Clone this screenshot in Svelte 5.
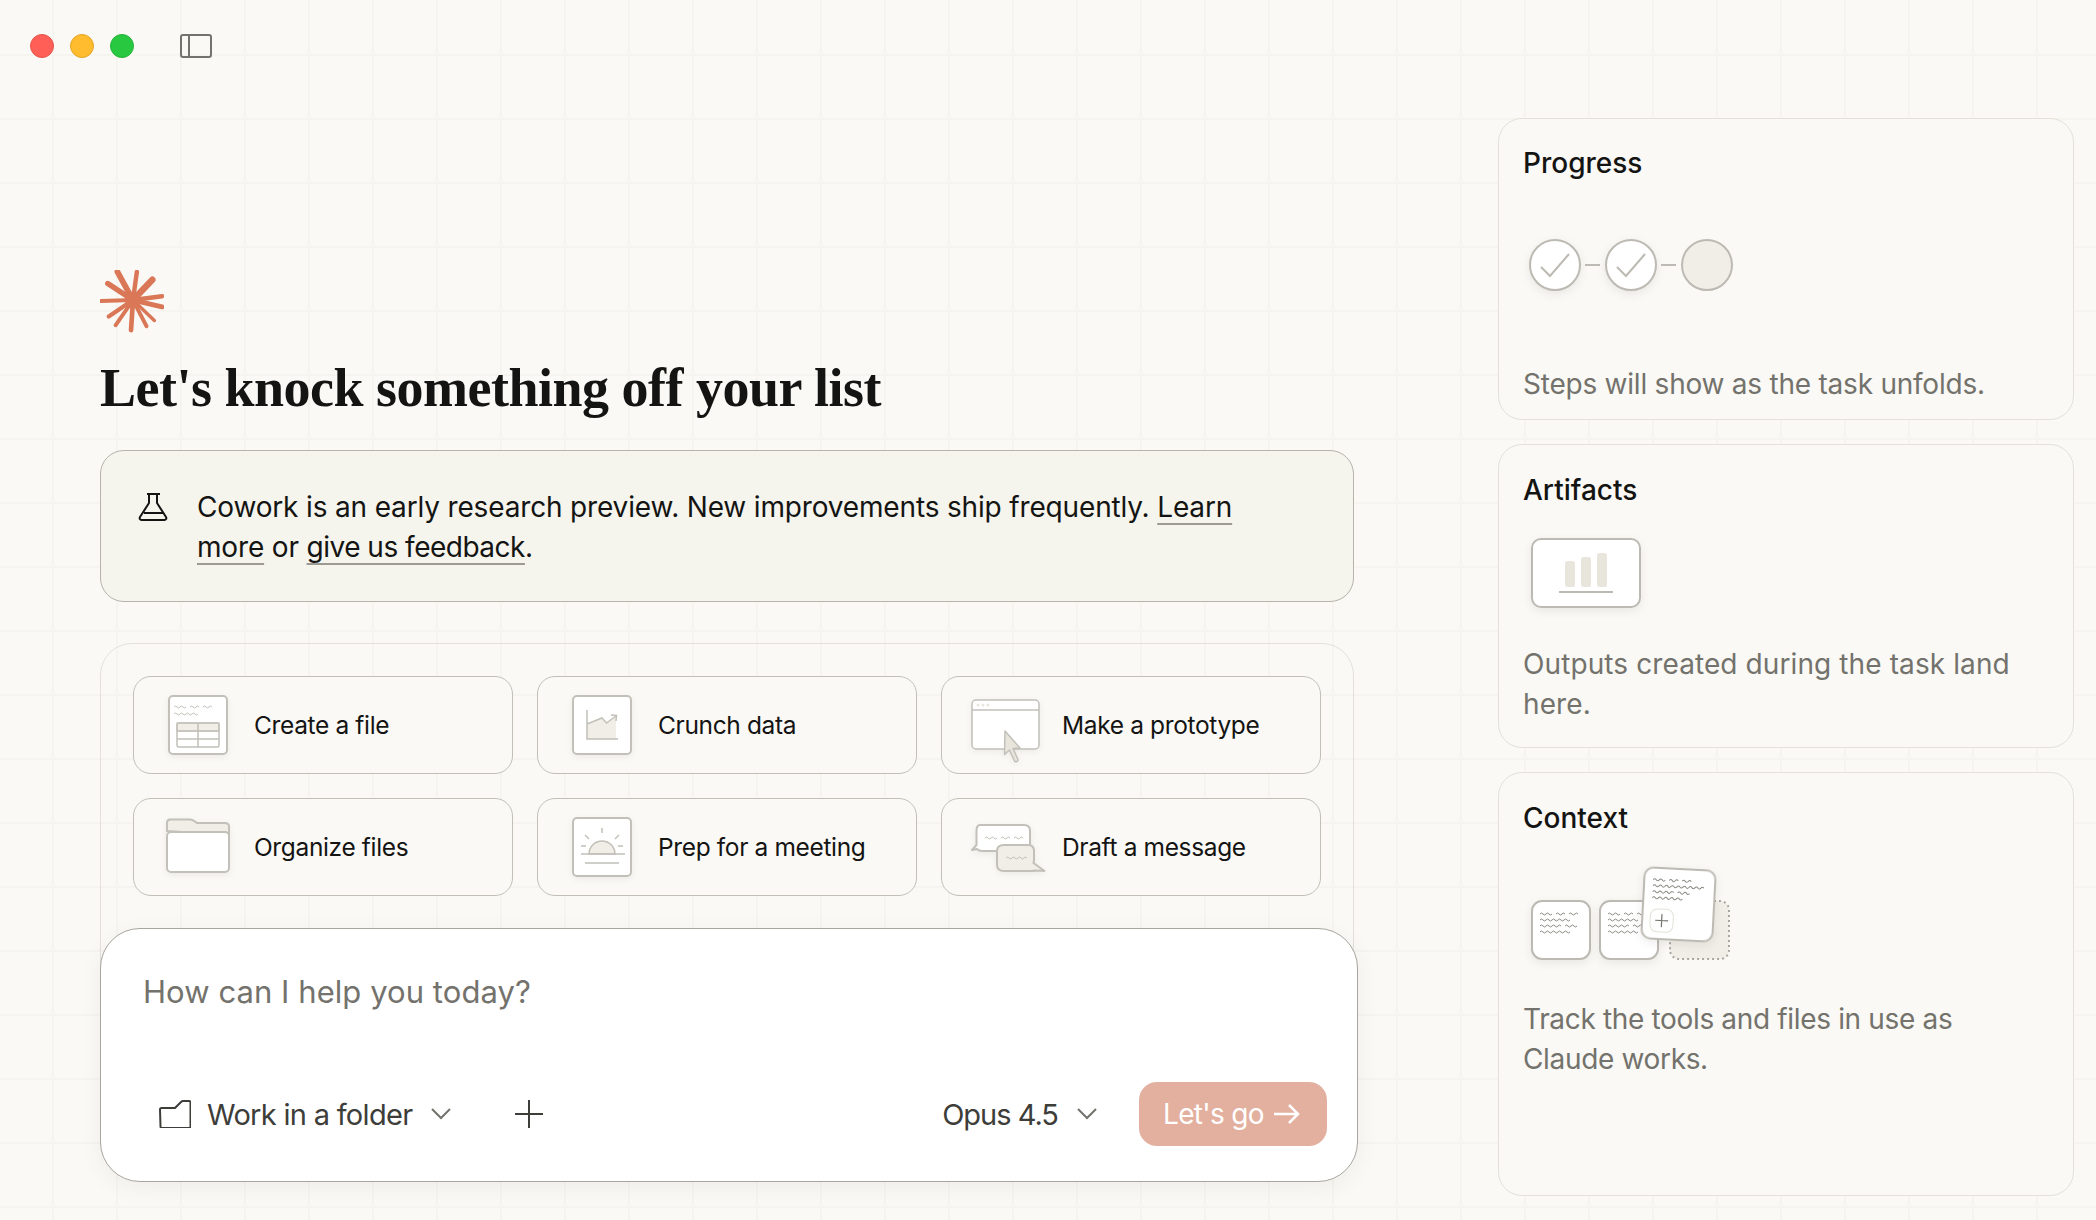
<script>
  // little scalloped "text" lines used in the illustrations
  const wave = (x, y, n, w = 3) => {
    let d = `M${x} ${y}`;
    for (let i = 0; i < n; i++) d += ` q${w / 2} ${i % 2 ? 2 : -2} ${w} 0`;
    return d;
  };
  const words = (x, y, counts, w = 3, gap = 4) => {
    let d = "";
    let cx = x;
    for (const c of counts) {
      d += wave(cx, y, c, w) + " ";
      cx += c * w + gap;
    }
    return d;
  };
  const rays = [
    [37, 21, 6], [57, 21, 4.6], [73, 29, 6.6], [83, 46, 4.6], [83, 57, 5],
    [75, 71, 3.6], [67, 77, 4], [51, 81, 4.8], [35, 76, 4], [28, 67, 4.4],
    [20, 51, 4.2], [27, 33, 5.6]
  ];
</script>

<div class="page">
  <header class="titlebar">
    <span class="light red"></span>
    <span class="light yellow"></span>
    <span class="light green"></span>
    <svg class="sidebar-toggle" width="32" height="24" viewBox="0 0 32 24" fill="none" stroke="#73726c" stroke-width="2">
      <rect x="1" y="1" width="30" height="22" rx="2" />
      <path d="M9 1v22" />
    </svg>
  </header>

  <div class="content">
    <main class="left">
      <svg class="star" width="64" height="64" viewBox="19 19 66 66" fill="none" stroke="#d97757" stroke-linecap="round">
        {#each rays as [x, y, w]}
          <path d={`M53 50 L${x} ${y}`} stroke-width={w} />
        {/each}
        <circle cx="53" cy="50" r="8" fill="#d97757" stroke="none" />
      </svg>
      <h1>Let's knock something off your list</h1>

      <div class="banner">
        <svg width="30" height="30" viewBox="0 0 30 30" fill="none" stroke="#141413" stroke-width="2" stroke-linejoin="round">
          <path d="M9 2h13M11 2v9L2 25c-.8 1.500 0 3 1.500 3h23c1.500 0 2.300-1.500 1.500-3l-9-14V2M6 21h19" />
        </svg>
        <p>Cowork is an early research preview. New improvements ship frequently. <a href="#learn">Learn</a> <a href="#learn">more</a> or <a class="feedback" href="#feedback">give us feedback</a>.</p>
      </div>

      <div class="panel">
        <div class="tiles">
          <button class="tile">
            <svg width="80" height="80" viewBox="0 0 80 80" fill="none" stroke="#c2c0b9">
              <rect x="11" y="11" width="58" height="58" rx="4" fill="#fff" stroke-width="2" />
              <path d={words(16, 22, [4, 3, 3])} stroke-width="1" />
              <path d={wave(16, 29, 8)} stroke-width="1" />
              <rect x="19" y="38" width="42" height="8" fill="#f0eee6" />
              <rect x="19" y="38" width="42" height="24" rx="1.500" stroke-width="1.500" />
              <path d="M19 46h42M19 54h42M40 38v24" stroke-width="1.500" />
            </svg>
            <span>Create a file</span>
          </button>
          <button class="tile">
            <svg width="80" height="80" viewBox="0 0 80 80" fill="none" stroke="#c2c0b9">
              <rect x="11" y="11" width="58" height="58" rx="4" fill="#fff" stroke-width="2" />
              <path d="M25 39l15-6 4.500 5L54 32v22H25z" fill="#f0eee6" stroke="none" />
              <path d="M25 25v29h31M25 39l15-6 4.500 5L54 31M49 30l5.500 .5L54 36" stroke-width="1.500" />
            </svg>
            <span>Crunch data</span>
          </button>
          <button class="tile">
            <svg width="80" height="80" viewBox="0 0 80 80" fill="none" stroke="#c2c0b9">
              <rect x="6" y="15" width="67" height="49" rx="4" fill="#fff" stroke-width="1.500" />
              <path d="M6 25h67" stroke-width="1.500" />
              <circle cx="12" cy="20" r="1.500" fill="#e8e6dc" stroke="none" />
              <circle cx="17" cy="20" r="1.500" fill="#e8e6dc" stroke="none" />
              <circle cx="22" cy="20" r="1.500" fill="#e8e6dc" stroke="none" />
              <path d="M39 46l15 17-7 .500 5 11c.500 2-2.500 3-3.500 1.500l-5-11-5 4.500z" fill="#e8e6dc" stroke-width="1.500" stroke-linejoin="round" />
            </svg>
            <span>Make a prototype</span>
          </button>
          <button class="tile">
            <svg width="80" height="80" viewBox="0 0 80 80" fill="none" stroke="#c2c0b9" stroke-width="2">
              <path d="M9 24v-8c0-2 1-3.500 3-3.500h20c2 0 3 .500 5 2l2 1.500h28c2 0 4 1 4 3.500V28z" fill="#f0eee6" />
              <rect x="9" y="25" width="62" height="40" rx="4" fill="#fff" />
            </svg>
            <span>Organize files</span>
          </button>
          <button class="tile">
            <svg width="80" height="80" viewBox="0 0 80 80" fill="none" stroke="#c2c0b9">
              <rect x="11" y="11" width="58" height="58" rx="4" fill="#fff" stroke-width="2" />
              <path d="M27 47a13 13 0 0 1 26 0z" fill="#f0eee6" stroke-width="1.500" />
              <path d="M19 47h44M23 56h34M40 21v5M23 28l4 4M57 28l-4 4M19 39h5M56 39h5" stroke-width="1.500" />
            </svg>
            <span>Prep for a meeting</span>
          </button>
          <button class="tile">
            <svg width="80" height="80" viewBox="0 0 80 80" fill="none" stroke="#c2c0b9">
              <path d="M14 18h44c4 0 6 2 6 6v14c0 4-2 6-6 6H16c-3 0-4-1-5-2l-5 1 4.500-5V24c0-4 1-6 3.500-6z" fill="#fff" stroke-width="2" stroke-linejoin="round" />
              <path d={words(19, 31, [4, 3, 3])} stroke-width="1" />
              <path d="M38 38h24c4 0 6 2 6 6v8c0 2 0 3-.500 4l11 8-9-.500c-1 .500-2 .500-4 .500H38c-4 0-7-2-7-6V44c0-4 3-6 7-6z" fill="#f0eee6" stroke-width="2" stroke-linejoin="round" />
              <path d={wave(40, 51, 7)} stroke-width="1" />
            </svg>
            <span>Draft a message</span>
          </button>
        </div>
      </div>

      <div class="composer">
        <div class="placeholder">How can I help you today?</div>
        <div class="composer-row">
          <div class="group">
            <svg width="32" height="28" viewBox="0 0 32 28" fill="none" stroke="#3d3d3a" stroke-width="2" stroke-linejoin="round">
              <path d="M1 9.500c0-1 .500-1.500 1.500-1.500h13.500l6-6c.500-.500 1-1 2-1h6c1 0 1.500 .500 1.500 1.500v24c0 1-.500 1.500-1.500 1.500h-27c-1 0-1.500-.500-1.500-1.500z" />
            </svg>
            <span class="folder-label">Work in a folder</span>
            <svg class="chev" width="20" height="12" viewBox="0 0 20 12" fill="none" stroke="#73726c" stroke-width="2"><path d="M1 1l9 9 9-9" /></svg>
            <svg class="plus" width="28" height="28" viewBox="0 0 28 28" fill="none" stroke="#3d3d3a" stroke-width="2"><path d="M14 0v28M0 14h28" /></svg>
          </div>
          <div class="group">
            <span class="model">Opus 4.5</span>
            <svg class="chev" width="20" height="12" viewBox="0 0 20 12" fill="none" stroke="#73726c" stroke-width="2"><path d="M1 1l9 9 9-9" /></svg>
            <button class="go">
              Let's go
              <svg width="26" height="22" viewBox="0 0 26 22" fill="none" stroke="#fff" stroke-width="2.500"><path d="M0 11h24M15 2l9 9-9 9" /></svg>
            </button>
          </div>
        </div>
      </div>
    </main>

    <aside class="right">
      <section class="card progress">
        <h2>Progress</h2>
        <svg class="art steps" width="170" height="64" viewBox="0 0 170 64" fill="none" stroke="#bcbab2" stroke-width="2">
          <circle cx="32" cy="32" r="25" fill="#fff" class="lift" />
          <path d="M18 34l9 9 19-22" stroke-width="2" />
          <path d="M62 32h15" />
          <circle cx="108" cy="32" r="25" fill="#fff" class="lift" />
          <path d="M94 34l9 9 19-22" stroke-width="2" />
          <path d="M138 32h15" />
          <circle cx="184" cy="32" r="25" fill="#f0eee6" />
        </svg>
        <p>Steps will show as the task unfolds.</p>
      </section>

      <section class="card artifacts">
        <h2>Artifacts</h2>
        <svg class="art" width="120" height="80" viewBox="0 0 120 80" fill="none">
          <rect x="9" y="10" width="108" height="68" rx="9" fill="#fff" stroke="#bcbab2" stroke-width="2" class="lift" />
          <rect x="42" y="32" width="10" height="26" rx="2.500" fill="#e8e6dc" />
          <rect x="58" y="28" width="10" height="30" rx="2.500" fill="#e8e6dc" />
          <rect x="74" y="24" width="10" height="34" rx="2.500" fill="#e8e6dc" />
          <path d="M36 63h54" stroke="#bcbab2" stroke-width="2" />
        </svg>
        <p>Outputs created during the task land here.</p>
      </section>

      <section class="card context">
        <h2>Context</h2>
        <svg class="art" width="220" height="110" viewBox="0 0 220 110" fill="none" stroke="#bcbab2">
          <rect x="147" y="44" width="59" height="58" rx="9" fill="#f0eee6" stroke="#a8a69e" stroke-width="2" stroke-dasharray="2 3" />
          <rect x="9" y="44" width="58" height="58" rx="10" fill="#fff" stroke-width="2" class="lift" />
          <path d={words(17, 57, [4, 3, 3])} stroke="#8c8a83" />
          <path d={wave(17, 63, 10)} stroke="#8c8a83" />
          <path d={words(17, 69, [7, 4])} stroke="#8c8a83" />
          <path d={wave(17, 75, 10)} stroke="#8c8a83" />
          <rect x="77" y="44" width="58" height="58" rx="10" fill="#fff" stroke-width="2" class="lift" />
          <path d={words(85, 57, [4, 3, 3])} stroke="#8c8a83" />
          <path d={wave(85, 63, 10)} stroke="#8c8a83" />
          <path d={words(85, 69, [7, 4])} stroke="#8c8a83" />
          <path d={wave(85, 75, 10)} stroke="#8c8a83" />
          <g transform="rotate(3 156 48)">
            <rect x="120" y="12" width="71" height="71" rx="9" fill="#fff" stroke-width="2" class="lift" />
            <path d={words(129, 24, [4, 3, 3])} stroke="#8c8a83" />
            <path d={wave(129, 30, 17)} stroke="#8c8a83" />
            <path d={words(129, 36, [7, 4])} stroke="#8c8a83" />
            <path d={wave(129, 42, 10)} stroke="#8c8a83" />
            <rect x="128" y="53" width="23" height="23" rx="7" fill="#fff" stroke="#e3e1d9" />
            <path d="M139.500 58v13M133 64.500h13" stroke="#73726c" stroke-width="1.200" />
          </g>
        </svg>
        <p>Track the tools and files in use as Claude works.</p>
      </section>
    </aside>
  </div>
</div>

<style>
  :global(body) {
    margin: 0;
    background: #faf9f5;
  }
  .page {
    width: 2096px;
    height: 1220px;
    overflow: hidden;
    background-color: #faf9f5;
    background-image:
      linear-gradient(to right, #f5f4ee 2px, transparent 2px),
      linear-gradient(to bottom, #f5f4ee 2px, transparent 2px);
    background-size: 64px 64px;
    background-position: 52px 54px;
    font-family: Inter, "Noto Sans", sans-serif;
    color: #141413;
  }
  .titlebar {
    height: 92px;
    display: flex;
    align-items: center;
    padding-left: 30px;
    box-sizing: border-box;
    gap: 16px;
  }
  .light {
    width: 24px;
    height: 24px;
    border-radius: 50%;
    box-sizing: border-box;
    border: 1px solid;
  }
  .red { background: #ff5f57; border-color: #e5534b; }
  .yellow { background: #febc2e; border-color: #e5a428; }
  .green { background: #28c840; border-color: #24b339; }
  .sidebar-toggle { margin-left: 30px; }

  .content {
    display: flex;
    align-items: flex-start;
  }
  .left {
    width: 1258px;
    margin-left: 100px;
    padding-top: 178px;
  }
  .star { display: block; }
  h1 {
    margin: 24px 0 32px;
    font-family: "Liberation Serif", serif;
    font-size: 54px;
    line-height: 60px;
    font-weight: 700;
    letter-spacing: -0.5px;
  }
  .banner {
    width: 1254px;
    height: 152px;
    box-sizing: border-box;
    display: flex;
    align-items: flex-start;
    gap: 29px;
    padding: 36px 100px 0 37px;
    background: #f5f4ed;
    border: 1.5px solid #b5b3ab;
    border-radius: 24px;
  }
  .banner svg { flex: none; margin-top: 5px; }
  .banner p {
    margin: 0;
    font-size: 28px;
    line-height: 40px;
    letter-spacing: -0.16px;
  }
  .banner a {
    color: inherit;
    text-decoration: underline;
    text-decoration-color: #9c9a92;
    text-decoration-thickness: 2px;
    text-underline-offset: 6px;
  }
  .banner .feedback { letter-spacing: -0.5px; }
  .panel {
    width: 1254px;
    margin-top: 41px;
    box-sizing: border-box;
    padding: 32px 32px 100px;
    border: 1.5px solid #e3e1d9;
    border-radius: 32px;
  }
  .tiles {
    display: grid;
    grid-template-columns: repeat(3, 380px);
    grid-auto-rows: 98px;
    gap: 24px;
  }
  .tile {
    display: flex;
    align-items: center;
    gap: 16px;
    padding: 0 0 0 24px;
    background: #faf9f5;
    border: 1.5px solid #c2c0b6;
    border-radius: 18px;
    font-family: inherit;
    font-size: 24.5px;
    letter-spacing: -0.36px;
    color: #141413;
    text-align: left;
  }
  .tile svg {
    flex: none;
    overflow: visible;
    filter: drop-shadow(0 2px 3px rgba(0, 0, 0, 0.06));
  }
  .composer {
    position: relative;
    height: 254px;
    margin-top: -69px;
    box-sizing: border-box;
    display: flex;
    flex-direction: column;
    justify-content: space-between;
    padding: 43px 30px 35px 42px;
    background: #fff;
    border: 1.5px solid #a8a69e;
    border-radius: 40px;
    box-shadow: 0 6px 24px rgba(0, 0, 0, 0.05);
  }
  .placeholder {
    font-size: 31px;
    line-height: 40px;
    letter-spacing: 0.06px;
    color: #73726c;
  }
  .composer-row {
    display: flex;
    justify-content: space-between;
    align-items: center;
    padding-left: 16px;
  }
  .group {
    display: flex;
    align-items: center;
  }
  .folder-label {
    margin: 0 19px 0 16px;
    font-size: 29px;
    letter-spacing: -0.7px;
    color: #3d3d3a;
  }
  .plus { margin-left: 64px; }
  .model {
    margin-right: 19px;
    font-size: 29px;
    letter-spacing: -1px;
    color: #3d3d3a;
  }
  .go {
    display: flex;
    align-items: center;
    gap: 10px;
    height: 64px;
    width: 188px;
    margin-left: 42px;
    padding: 0 0 0 24px;
    border: none;
    border-radius: 18px;
    background: #e3b0a0;
    color: #fff;
    font-family: inherit;
    font-size: 28px;
    letter-spacing: -0.7px;
  }

  .right {
    width: 576px;
    margin-left: 140px;
    margin-top: 26px;
    display: flex;
    flex-direction: column;
    gap: 24px;
  }
  .card {
    box-sizing: border-box;
    padding: 0 24px;
    border: 1.5px solid #e3e1d9;
    border-radius: 24px;
    background: #faf9f5;
  }
  .progress { height: 302px; }
  .artifacts { height: 304px; }
  .context { height: 424px; }
  h2 {
    margin: 26px 0 0;
    font-size: 28px;
    line-height: 36px;
    font-weight: 500;
  }
  .artifacts h2,
  .context h2 { margin-top: 27px; }
  .card p {
    margin: 0;
    font-size: 28px;
    line-height: 40px;
    color: #73726c;
  }
  .art {
    display: block;
    overflow: visible;
  }
  .lift { filter: drop-shadow(0 3px 5px rgba(0, 0, 0, 0.07)); }
  .steps { margin: 52px 0 0; }
  .progress p { margin-top: 67px; letter-spacing: -0.23px; }
  .artifacts .art { margin: 21px 0 0; }
  .artifacts p { margin-top: 35px; letter-spacing: 0.1px; }
  .context .art { margin: 21px 0 0; }
  .context p { margin-top: 32px; letter-spacing: -0.34px; }
</style>
